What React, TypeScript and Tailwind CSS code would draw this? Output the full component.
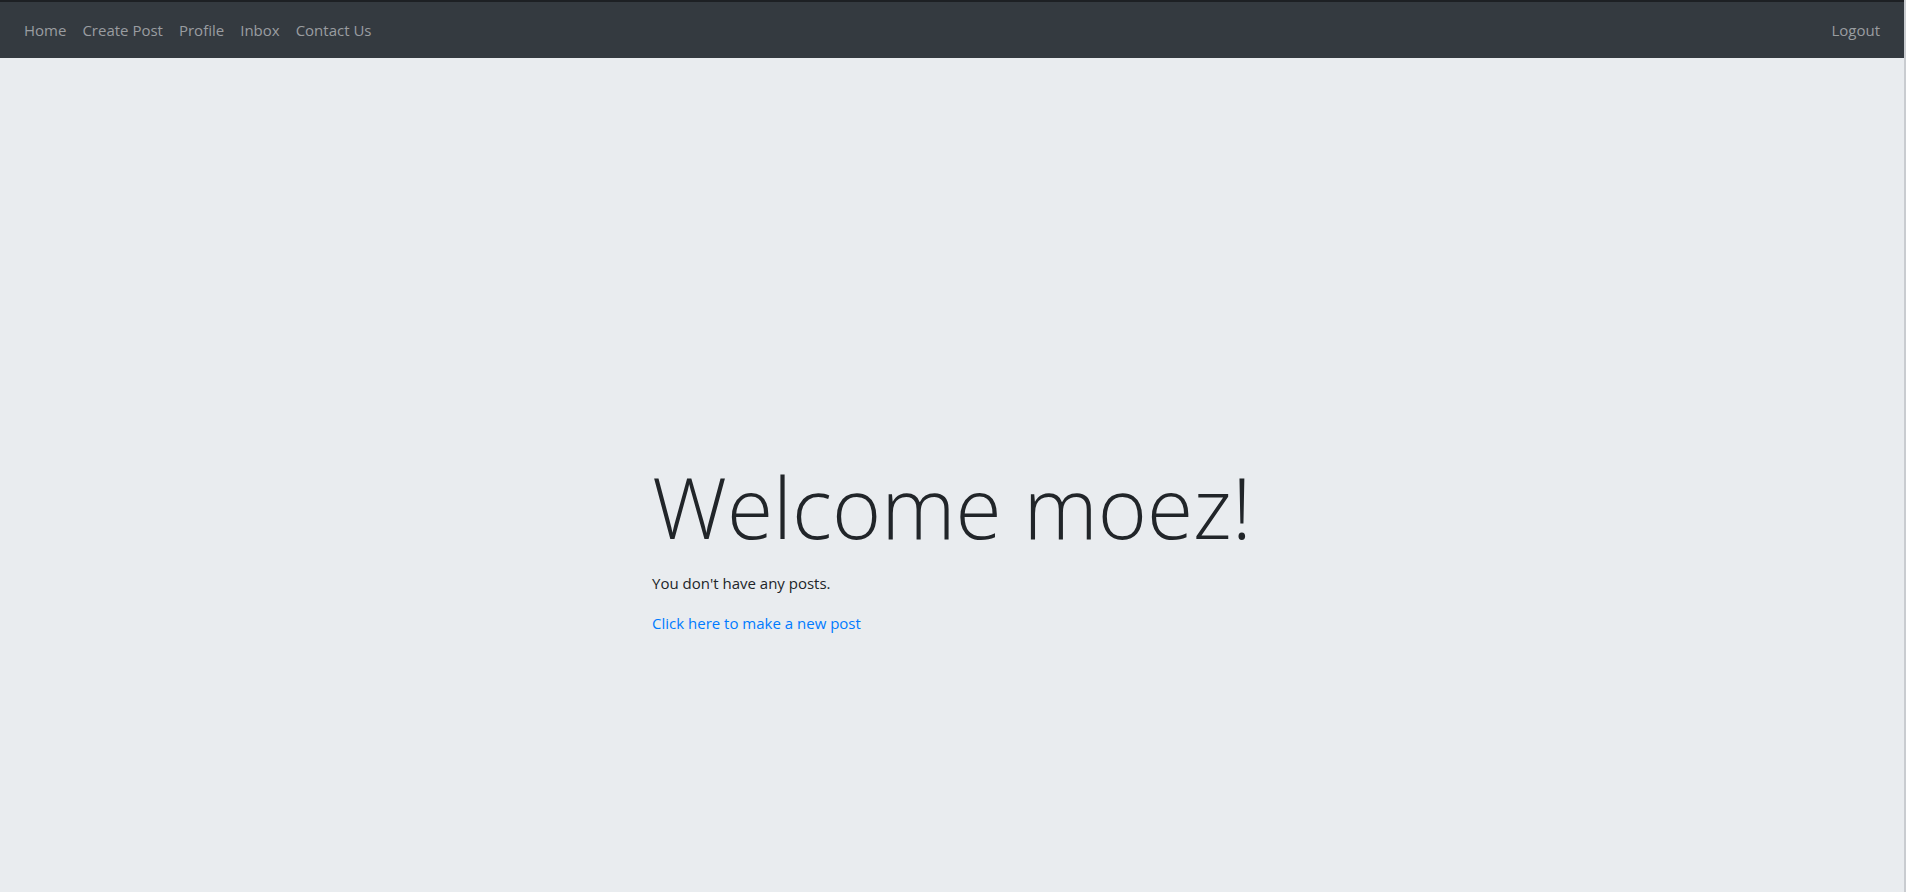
const navLinks = ["Home", "Create Post", "Profile", "Inbox", "Contact Us"];

export default function App() {
  return (
    <div
      className="flex min-h-screen flex-col border-r-2 border-[#c9ccd0] bg-[#e9ecef] text-[#212529]"
      style={{ fontFamily: '"Open Sans", "Noto Sans", sans-serif' }}
    >
      <nav className="flex items-center justify-between border-t-2 border-[#1d2024] bg-[#343a40] px-4 py-2">
        <ul className="flex">
          {navLinks.map((link) => (
            <li key={link}>
              <a href="#" className="block px-2 py-2 text-[15px] leading-6 text-[#9a9da0]">
                {link}
              </a>
            </li>
          ))}
        </ul>
        <a href="#" className="block px-2 py-2 text-[15px] leading-6 text-[#9a9da0]">
          Logout
        </a>
      </nav>

      <main className="flex flex-1 justify-center pt-[393px]">
        <div>
          <h1 className="mb-2 text-[84px] leading-[112px] font-light">Welcome moez!</h1>
          <p className="mb-4 text-[15px] leading-6">You don't have any posts.</p>
          <p className="mb-4 text-[15px] leading-6">
            <a href="#" className="text-[#007bff]">
              Click here to make a new post
            </a>
          </p>
        </div>
      </main>
    </div>
  );
}
